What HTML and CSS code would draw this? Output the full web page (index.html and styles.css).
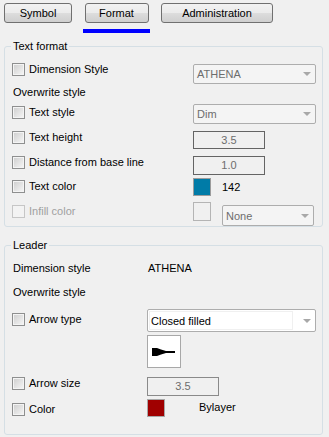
FILE: index.html
```html
<!DOCTYPE html>
<html>
<head>
<meta charset="utf-8">
<link rel="stylesheet" href="styles.css">
</head>
<body>
<div class="tabs">
	<div class="tab"><button class="btn btn_symbol">Symbol</button></div>
	<div class="tab">
		<button class="btn btn_format">Format</button>
		<div class="active_bar"></div>
	</div>
	<div class="tab"><button class="btn btn_admin">Administration</button></div>
</div>

<fieldset class="group group_text">
	<legend>Text format</legend>
	<div class="row r_dim">
		<label class="lbl lbl_top"><span class="cb"></span>Dimension Style</label>
		<div class="combo combo_dis c_athena"><span>ATHENA</span><i class="arrow"></i></div>
	</div>
	<div class="row r_over">
		<span class="plain">Overwrite style</span>
	</div>
	<div class="row r_tstyle">
		<label class="lbl lbl_tstyle"><span class="cb"></span>Text style</label>
		<div class="combo combo_dis c_dim"><span>Dim</span><i class="arrow"></i></div>
	</div>
	<div class="row r_theight">
		<label class="lbl"><span class="cb"></span>Text height</label>
		<div class="edit">3.5</div>
	</div>
	<div class="row r_dist">
		<label class="lbl"><span class="cb"></span>Distance from base line</label>
		<div class="edit edit_tall">1.0</div>
	</div>
	<div class="row r_tcolor">
		<label class="lbl lbl_tcolor"><span class="cb"></span>Text color</label>
		<span class="swatch sw_blue"></span>
		<span class="color_val">142</span>
	</div>
	<div class="row r_infill">
		<label class="lbl lbl_infill disabled"><span class="cb cb_dis"></span>Infill color</label>
		<span class="swatch sw_empty"></span>
		<div class="combo combo_dis c_none"><span>None</span><i class="arrow"></i></div>
	</div>
</fieldset>

<fieldset class="group group_leader">
	<legend>Leader</legend>
	<div class="row l_dim">
		<span class="plain plain_wide">Dimension style</span>
		<span class="plain">ATHENA</span>
	</div>
	<div class="row l_over">
		<span class="plain">Overwrite style</span>
	</div>
	<div class="row l_atype">
		<label class="lbl lbl_atype"><span class="cb"></span>Arrow type</label>
		<div class="combo combo_edit c_closed"><span class="field"><b>Closed filled</b></span><i class="arrow"></i></div>
	</div>
	<div class="row l_preview">
		<div class="preview">
			<svg width="33" height="33" viewBox="0 0 33 33">
				<polygon points="5,13 10,13 14,14.5 19,16 28,16 28,18 19,18 14,19.5 10,21 5,21" fill="#000"/>
			</svg>
		</div>
	</div>
	<div class="row l_asize">
		<label class="lbl lbl_leader"><span class="cb"></span>Arrow size</label>
		<div class="edit edit_light">3.5</div>
	</div>
	<div class="row l_color">
		<label class="lbl lbl_leader lbl_color"><span class="cb"></span>Color</label>
		<span class="swatch sw_red"></span>
		<span class="color_val bylayer">Bylayer</span>
	</div>
</fieldset>
</body>
</html>
```

FILE: styles.css
```css
body {
	margin:0;
	background:#f0f0f0;
	font-family:"Liberation Sans", Arial, sans-serif;
	font-size:11px;
	color:#000;
}

/* top buttons */
.tabs {
	display:flex;
	align-items:flex-start;
	gap:11px;
	padding:3px 0 0 4px;
	height:30px;
	margin-bottom:7px;
}
.tab {
	display:flex;
	flex-direction:column;
	align-items:center;
}
.btn {
	height:20px;
	border:1px solid #707070;
	border-radius:3px;
	background:linear-gradient(#f2f2f2 0%, #ebebeb 50%, #dddddd 51%, #cfcfcf 100%);
	font-family:inherit;
	font-size:11px;
	color:#000;
	padding:0;
}
.btn_symbol { width:68px; }
.btn_format { width:64px; }
.btn_admin { width:112px; }
.active_bar {
	width:67px;
	height:4px;
	margin-top:6px;
	background:#0000ff;
}

/* group boxes */
.group {
	margin:0 6px 0 4px;
	border:1px solid #d5dfe5;
	border-radius:3px;
	padding:10px 0 0 7px;
}
.group legend {
	padding:0 2px;
	margin-left:-1px;
	line-height:13px;
}
.group_leader {
	margin-top:12px;
	padding-top:9px;
	padding-bottom:17px;
}

.row {
	display:flex;
	align-items:flex-start;
}
.lbl {
	display:flex;
	align-items:center;
	gap:4px;
	width:181px;
	height:13px;
	line-height:13px;
	white-space:nowrap;
}
.lbl_leader, .lbl_atype { width:135px; }
.disabled { color:#a0a0a0; }
.plain {
	line-height:14px;
	height:14px;
	padding-left:1px;
}
.plain_wide { width:134px; }

.cb {
	display:inline-block;
	width:11px;
	height:11px;
	border:1px solid #8e8f8f;
	background:linear-gradient(135deg, #cdcdcd, #f7f7f7);
	box-shadow:inset 0 0 0 1px #f4f4f4;
	flex:none;
}
.cb_dis {
	border-color:#c6c6c6;
	background:#f3f3f3;
	box-shadow:none;
}

/* combos and edits */
.combo {
	display:flex;
	align-items:center;
	justify-content:space-between;
	box-sizing:border-box;
	height:20px;
	border:1px solid #adadad;
	border-radius:2px;
	background:#f4f4f4;
	color:#6d6d6d;
	padding:0 4px 0 3px;
}
.arrow {
	width:0;
	height:0;
	border-left:4px solid transparent;
	border-right:4px solid transparent;
	border-top:4px solid #a8a8a8;
}
.c_athena, .c_dim { width:123px; }
.c_athena { margin-top:1px; }
.c_none {
	width:92px;
	height:21px;
	margin-top:3px;
	margin-left:11px;
}
.combo_edit {
	width:169px;
	height:23px;
	margin-top:1px;
	background:#fff;
	color:#000;
	padding:1px 4px 1px 1px;
	align-items:stretch;
}
.combo_edit .field {
	flex:1;
	display:flex;
	align-items:center;
	border:1px solid #f0f0f0;
	margin-right:10px;
	padding-left:1px;
}
.combo_edit b {
	font-weight:normal;
	background:#fff;
}
.combo_edit .arrow { align-self:center; }

.edit {
	box-sizing:border-box;
	width:72px;
	height:18px;
	border:1px solid #646464;
	color:#6d6d6d;
	text-align:center;
	line-height:16px;
}
.edit_tall { height:19px; line-height:17px; }
.edit_light {
	border-color:#8a8a8a;
	height:19px;
	line-height:17px;
}

.swatch {
	display:inline-block;
	box-sizing:border-box;
	width:18px;
	height:18px;
	border:1px solid #9c9c9c;
	flex:none;
}
.sw_blue { background:#007ba7; }
.sw_red { background:#a00000; border-color:#a8a8a8; }
.sw_empty { height:19px; border-color:#b4b4b4; background:#f0f0f0; }
.color_val {
	line-height:18px;
	margin-left:11px;
}
.bylayer { margin-left:34px; line-height:17px; }

.preview {
	box-sizing:border-box;
	width:34px;
	height:33px;
	border:1px solid #a8a8a8;
	background:#fff;
	margin-left:135px;
}
.preview svg { display:block; margin:-1px 0 0 -1px; }

/* row spacing, text format */
.r_dim { height:21px; }
.r_over { margin-top:1px; height:14px; }
.r_tstyle { margin-top:5px; height:20px; }
.lbl_tstyle { margin-top:2px; }
.r_theight { margin-top:7px; height:18px; }
.r_dist { margin-top:7px; height:19px; }
.r_tcolor { margin-top:3px; height:18px; }
.lbl_tcolor { margin-top:2px; }
.r_infill { margin-top:6px; height:24px; }
.lbl_infill { margin-top:3px; }

/* row spacing, leader */
.l_over { margin-top:10px; }
.l_atype { margin-top:9px; height:24px; }
.lbl_atype { margin-top:5px; }
.l_preview { margin-top:3px; }
.l_asize { margin-top:9px; height:19px; }
.l_color { margin-top:3px; height:18px; }
.lbl_color { margin-top:4px; }
```
